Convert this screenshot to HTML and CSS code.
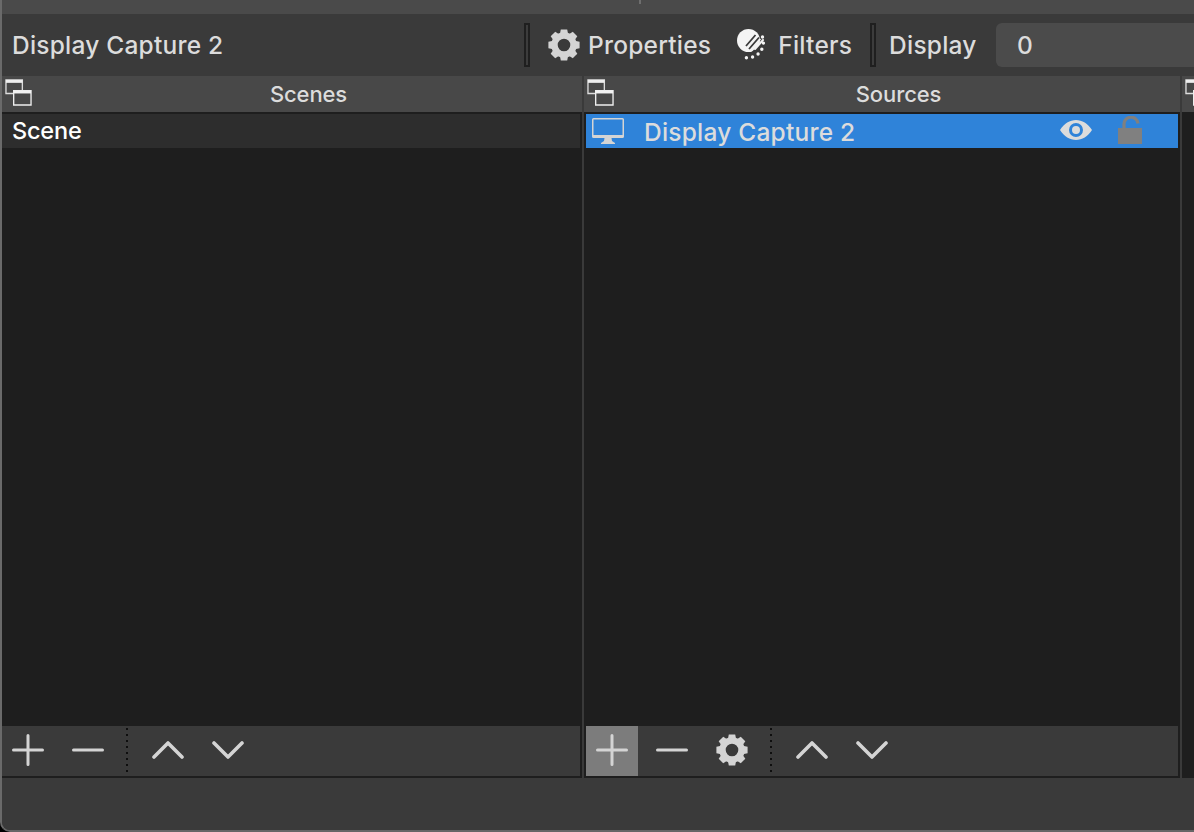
FILE: index.html
```html
<!DOCTYPE html>
<html lang="en">
<head>
  <meta charset="UTF-8">
  <title>OBS</title>
  <link rel="stylesheet" href="styles.css">
</head>
<body>
  <svg class="defs" width="0" height="0">
    <defs>
      <symbol id="dock" viewBox="0 0 28 28">
        <path d="M1 1h17v14H1z" fill="none" stroke="#ddd" stroke-width="1.4"/>
        <path d="M1 1h17v3H1z" fill="#eee"/>
        <path d="M9 12h18v15H9z" fill="#484848" stroke="#eee" stroke-width="1.4"/>
        <path d="M9 12h18v3H9z" fill="#f2f2f2"/>
      </symbol>
      <symbol id="gear" viewBox="0 0 32 32">
        <circle cx="16" cy="16" r="9.5" fill="none" stroke="currentColor" stroke-width="6.4"/>
        <g fill="currentColor">
          <path id="tooth" d="M12.8 0.4h6.4l1 5h-8.4z"/>
          <use href="#tooth" transform="rotate(45 16 16)"/>
          <use href="#tooth" transform="rotate(90 16 16)"/>
          <use href="#tooth" transform="rotate(135 16 16)"/>
          <use href="#tooth" transform="rotate(180 16 16)"/>
          <use href="#tooth" transform="rotate(225 16 16)"/>
          <use href="#tooth" transform="rotate(270 16 16)"/>
          <use href="#tooth" transform="rotate(315 16 16)"/>
        </g>
      </symbol>
      <symbol id="plus" viewBox="0 0 32 32">
        <path d="M1.500 16h29M16 1.500v29" stroke="currentColor" stroke-width="3" stroke-linecap="round"/>
      </symbol>
      <symbol id="minus" viewBox="0 0 32 32">
        <path d="M1.500 16h29" stroke="currentColor" stroke-width="3" stroke-linecap="round"/>
      </symbol>
      <symbol id="up" viewBox="0 0 32 32">
        <path d="M2 23L16 9l14 14" fill="none" stroke="currentColor" stroke-width="3.6" stroke-linecap="round" stroke-linejoin="round"/>
      </symbol>
      <symbol id="down" viewBox="0 0 32 32">
        <path d="M2 9l14 14L30 9" fill="none" stroke="currentColor" stroke-width="3.6" stroke-linecap="round" stroke-linejoin="round"/>
      </symbol>
    </defs>
  </svg>

  <div class="window">
    <div class="titlestrip"><span class="tick"></span></div>

    <div class="contextbar">
      <span class="context-name">Display Capture 2</span>
      <span class="vline"></span>
      <button class="ctx-btn props">
        <svg class="ctx-icon"><use href="#gear"/></svg>Properties
      </button>
      <button class="ctx-btn filters">
        <svg class="ctx-icon" viewBox="0 0 32 32">
          <circle cx="11.500" cy="11.500" r="11.500" fill="#f4f4f4"/>
          <path d="M13 20.500L23 9.500" stroke="#f4f4f4" stroke-width="3"/>
          <path d="M9 17L18.500 6M12 20L22 8.500M15.500 23.500L25 13" stroke="#3a3a3a" stroke-width="1.800"/>
          <path d="M18 20L26 11" stroke="#f4f4f4" stroke-width="2" stroke-linecap="round"/>
          <path d="M25.500 8A15.500 15.500 0 0 1 8 28.500" fill="none" stroke="#f4f4f4" stroke-width="3.400" stroke-linecap="round" stroke-dasharray="0 6.200"/>
        </svg>Filters
      </button>
      <span class="vline second"></span>
      <span class="display-label">Display</span>
      <div class="combo">0</div>
    </div>

    <div class="docks">
      <section class="dock scenes">
        <header class="dock-head">
          <svg class="dock-icon"><use href="#dock"/></svg>
          <span class="dock-title">Scenes</span>
        </header>
        <div class="list">
          <div class="row scene-row">Scene</div>
        </div>
        <div class="toolbar">
          <button class="tool"><svg><use href="#plus"/></svg></button>
          <button class="tool"><svg><use href="#minus"/></svg></button>
          <span class="dots"></span>
          <button class="tool"><svg><use href="#up"/></svg></button>
          <button class="tool"><svg><use href="#down"/></svg></button>
        </div>
      </section>

      <section class="dock sources">
        <header class="dock-head">
          <svg class="dock-icon"><use href="#dock"/></svg>
          <span class="dock-title">Sources</span>
        </header>
        <div class="list">
          <div class="row source-row">
            <svg class="monitor" viewBox="0 0 32 26">
              <path d="M1.500 0h29A1.500 1.500 0 0 1 32 1.500v17a1.500 1.500 0 0 1-1.500 1.500h-29A1.500 1.500 0 0 1 0 18.500v-17A1.500 1.500 0 0 1 1.500 0zM1.500 1.500v15.500h29V1.500zM12.500 20h7l.5 3 3 2v1H9v-1l3-2z" fill="#d4d4d4" fill-rule="evenodd"/>
            </svg>
            <span class="source-name">Display Capture 2</span>
            <svg class="eye" viewBox="0 0 32 20">
              <path d="M0 10C4 3.500 10 0 16 0s12 3.500 16 10c-4 6.500-10 10-16 10S4 16.500 0 10zM16 3a7 7 0 1 0 0 14 7 7 0 0 0 0-14z" fill="#dcdcdc" fill-rule="evenodd"/>
              <circle cx="16" cy="10" r="4" fill="#dcdcdc"/>
            </svg>
            <svg class="lock" viewBox="0 0 24 28">
              <path d="M0 12h24v16H0z" fill="#808080"/>
              <path d="M6 12V9a7 7 0 0 1 14-1.500" fill="none" stroke="#808080" stroke-width="3.200"/>
            </svg>
          </div>
        </div>
        <div class="toolbar">
          <button class="tool hover"><svg><use href="#plus"/></svg></button>
          <button class="tool"><svg><use href="#minus"/></svg></button>
          <button class="tool"><svg><use href="#gear"/></svg></button>
          <span class="dots"></span>
          <button class="tool"><svg><use href="#up"/></svg></button>
          <button class="tool"><svg><use href="#down"/></svg></button>
        </div>
      </section>

      <section class="dock mixer">
        <header class="dock-head">
          <svg class="dock-icon"><use href="#dock"/></svg>
        </header>
        <div class="list"></div>
      </section>
    </div>

    <div class="footer"></div>
  </div>
</body>
</html>
```

FILE: styles.css
```css
* { box-sizing: border-box; }
html, body { margin: 0; height: 100%; background: #000; overflow: hidden; }
body { font-family: Inter, "Noto Sans", sans-serif; color: #dcdcdc; }
.defs { position: absolute; }

.window {
  width: 1194px;
  height: 832px;
  display: flex;
  flex-direction: column;
  background: #3a3a3a;
  border-left: 2px solid #6a6a6a;
  border-bottom: 2px solid #666;
  border-bottom-left-radius: 10px;
  overflow: hidden;
}

.titlestrip {
  height: 14px;
  flex: none;
  padding-left: 637px;
  background: #4a4a4a;
}
.tick { display: block; width: 2px; height: 4px; background: #6e6e6e; }

.contextbar {
  height: 62px;
  flex: none;
  display: flex;
  align-items: center;
  font-size: 24.5px;
  font-weight: 500;
  letter-spacing: 0.22px;
  background: #3a3a3a;
}
.context-name { width: 522px; padding-left: 10px; white-space: nowrap; }
.vline {
  width: 6px;
  height: 44px;
  flex: none;
  border: 2px solid #1f1f1f;
  background: #3c3c3c;
}
.vline.second { margin-left: 18px; }
.ctx-btn {
  display: flex;
  align-items: center;
  padding: 0;
  border: 0;
  background: none;
  color: inherit;
  font: inherit;
  letter-spacing: inherit;
}
.ctx-icon { width: 32px; height: 32px; color: #d4d4d4; }
.props { margin-left: 18px; gap: 8px; }
.filters { margin-left: 26px; gap: 9px; }
.display-label { margin-left: 13px; width: 107px; }
.combo {
  flex: 1;
  height: 44px;
  padding-left: 21px;
  line-height: 44px;
  border-radius: 6px 0 0 6px;
  background: #4b4b4b;
}

.docks { height: 702px; flex: none; display: flex; gap: 2px; background: #3a3a3a; }
.dock { display: flex; flex-direction: column; background: #1e1e1e; flex: none; }
.scenes { width: 580px; }
.sources { width: 596px; }
.mixer { flex: 1; min-width: 0; overflow: hidden; }

.dock-head {
  height: 36px;
  flex: none;
  display: flex;
  font-size: 22px;
  font-weight: 500;
  letter-spacing: -0.1px;
  background: #484848;
}
.dock-icon { width: 27px; height: 27px; margin: 3px 3px 0 3px; flex: none; }
.dock-title { flex: 1; padding-top: 6px; text-align: center; line-height: 24px; }

.list { flex: 1; padding-top: 2px; min-height: 0; }
.row { height: 34px; display: flex; align-items: center; font-size: 24.5px; font-weight: 500; letter-spacing: 0.22px; }
.scene-row { margin-right: 2px; padding: 0 0 2px 10px; font-size: 23.500px; letter-spacing: -0.2px; color: #fff; background: #2d2d2d; }
.source-row { margin: 0 2px; padding-left: 6px; background: #2f83d9; }
.monitor { width: 32px; height: 26px; flex: none; }
.source-name { width: 416px; margin-left: 20px; padding-top: 1px; white-space: nowrap; }
.eye { width: 32px; height: 20px; margin-top: -2px; flex: none; }
.lock { width: 24px; height: 28px; margin-left: 26px; margin-top: -2px; flex: none; }

.toolbar {
  height: 50px;
  margin-bottom: 2px;
  flex: none;
  display: flex;
  gap: 8px;
  background: #3a3a3a;
  color: #d4d4d4;
}
.scenes .toolbar { margin-right: 2px; }
.sources .toolbar { margin-left: 2px; margin-right: 2px; }
.tool {
  width: 52px;
  padding: 0;
  border: 0;
  background: none;
  color: inherit;
  display: flex;
  align-items: center;
  justify-content: center;
}
.tool svg { width: 32px; height: 32px; margin-top: -2px; }
.tool.hover { background: #7c7c7c; }
.dots {
  width: 2px;
  height: 44px;
  margin: 2px 6px 0 4px;
  flex: none;
  background: repeating-linear-gradient(#0e0e0e 0 2px, transparent 2px 6px);
}

.footer { flex: 1; background: #3a3a3a; }
```
